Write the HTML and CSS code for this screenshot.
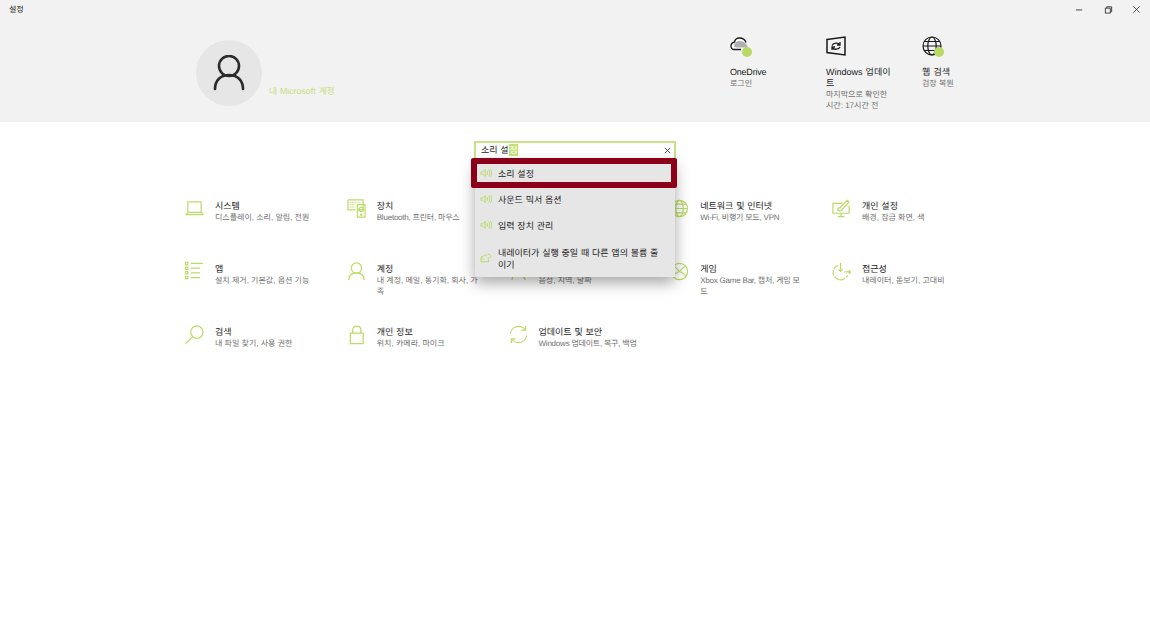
FILE: index.html
```html
<!DOCTYPE html>
<html lang="ko">
<head>
<meta charset="utf-8">
<title>설정</title>
<link rel="stylesheet" href="styles.css">
</head>
<body>
<div class="app">
  <header class="top">
    <div class="titlebar">
      <span class="apptitle">설정</span>
      <div class="winbtns">
        <svg class="winbtn" viewBox="0 0 10 10"><path d="M1 5.500h7" stroke="#333" fill="none"/></svg>
        <svg class="winbtn" viewBox="0 0 10 10"><path d="M1.500 3.500h5.500v5.500h-5.500zM3 3.500v-1.500h5.500v5.500h-1.500" stroke="#333" fill="none"/></svg>
        <svg class="winbtn" viewBox="0 0 10 10"><path d="M1.500 1.500l7 7M8.500 1.500l-7 7" stroke="#333" fill="none" stroke-width=".9"/></svg>
      </div>
    </div>
    <div class="hero">
      <div class="account">
        <div class="avatar">
          <svg width="32" height="36" viewBox="0 0 32 36"><circle cx="16" cy="11" r="10" fill="none" stroke="#2b2b2b" stroke-width="2.600"/><path d="M2 34c0-8 5-14 14-14s14 6 14 14" fill="none" stroke="#2b2b2b" stroke-width="2.600" stroke-linecap="round"/></svg>
        </div>
        <span class="acctlink">내 Microsoft 계정</span>
      </div>
      <div class="quick">
        <div class="qitem">
          <div class="qicon">
            <svg width="22" height="22" viewBox="0 0 22 22"><path d="M16 6.500C15 3.500 12.500 2 9.500 2 7 2 5 3.500 4.500 6 2.500 6.500 1 8 1 10c0 2 1.500 3.500 3.500 3.500H11" fill="#fff" stroke="#1a1a1a" stroke-width="1.300"/><path d="M4.500 7.500C6 5.500 8 5 10 5c3 0 5 1.500 6.500 3.500l1.500 3H6l-2-1z" fill="#b0b0b0"/></svg>
            <i class="dot"></i>
          </div>
          <div class="qname tight">OneDrive</div>
          <div class="qsub">로그인</div>
        </div>
        <div class="qitem">
          <div class="qicon">
            <svg width="20" height="20" viewBox="0 0 20 20"><path d="M1 3.500l18-2.500v18l-18-2.500z" fill="none" stroke="#1a1a1a" stroke-width="1.500"/><path d="M6 9.500c1-2.500 6-3.500 7.500-1M14 11c-1 2.500-6 3-7.500 1M14 6v3h-3M6 14v-3h3" fill="none" stroke="#1a1a1a" stroke-width="1.300"/></svg>
          </div>
          <div class="qname">Windows 업데이트</div>
          <div class="qsub">마지막으로 확인한 시간: 17시간 전</div>
        </div>
        <div class="qitem">
          <div class="qicon">
            <svg width="20" height="20" viewBox="0 0 20 20"><g fill="none" stroke="#1a1a1a" stroke-width="1.200"><circle cx="10" cy="10" r="9"/><ellipse cx="10" cy="10" rx="4.200" ry="9"/><path d="M1 10h18M2.500 5.500h15M2.500 14.500h15"/></g></svg>
            <i class="dot"></i>
          </div>
          <div class="qname">웹 검색</div>
          <div class="qsub">검장 복원</div>
        </div>
      </div>
    </div>
  </header>

  <main class="grid">
    <div class="tile">
      <svg class="ticon" viewBox="0 0 20 20"><path d="M3 3h14v11h-14zM.8 16.500h18.400M.8 16.500l2.200-2.500M19.200 16.500l-2.200-2.500" /></svg>
      <div class="ttext"><div class="tname">시스템</div><div class="tsub">디스플레이, 소리, 알림, 전원</div></div>
    </div>
    <div class="tile">
      <svg class="ticon" viewBox="0 0 20 20"><path d="M1 1h16v10.500h-6M1 1v10.500h8M11 6h8v13h-8z"/><circle cx="15" cy="11" r="2.200"/><circle cx="15" cy="16.500" r=".7"/><path d="M3 3.500h12M3 6h6M3 8.500h5" stroke-dasharray="1 1"/></svg>
      <div class="ttext"><div class="tname">장치</div><div class="tsub tight">Bluetooth, 프린터, 마우스</div></div>
    </div>
    <div class="tile">
      <svg class="ticon" viewBox="0 0 20 20"><rect x="5" y="1" width="10" height="18" rx="1"/></svg>
      <div class="ttext"><div class="tname">전화</div><div class="tsub">Android, iPhone 연결</div></div>
    </div>
    <div class="tile">
      <svg class="ticon" viewBox="0 0 20 20"><circle cx="10" cy="10" r="8.500"/><ellipse cx="10" cy="10" rx="4" ry="8.500"/><path d="M1.500 10h17M3 5.500h14M3 14.500h14"/></svg>
      <div class="ttext"><div class="tname">네트워크 및 인터넷</div><div class="tsub tight">Wi-Fi, 비행기 모드, VPN</div></div>
    </div>
    <div class="tile">
      <svg class="ticon" viewBox="0 0 20 20"><path d="M11 4.500h-10v10.500h17v-8M6 18.500h7M9.500 15v3.500M6 12c0-2 1-3 2.500-3L16 1.500l2 2-7.500 7.500c0 1.500-2.500 1.500-4.500 1z"/></svg>
      <div class="ttext"><div class="tname">개인 설정</div><div class="tsub">배경, 잠금 화면, 색</div></div>
    </div>
    <div class="tile">
      <svg class="ticon" viewBox="0 0 20 20"><path d="M6 1.500h13M6 6.500h10M6 11.500h10M6 16.500h10"/><path d="M.5.500h2.500v2.500h-2.500zM.5 5.300h2.500v2.500h-2.500zM.5 10h2.500v2.500h-2.500zM.5 15h2.500v2.500h-2.500z"/></svg>
      <div class="ttext"><div class="tname">앱</div><div class="tsub">설치 제거, 기본값, 옵션 기능</div></div>
    </div>
    <div class="tile">
      <svg class="ticon" viewBox="0 0 20 20"><circle cx="10" cy="6.500" r="5.500"/><path d="M2 19c0-5 3.500-7.500 8-7.500s8 2.500 8 7.500"/></svg>
      <div class="ttext"><div class="tname">계정</div><div class="tsub">내 계정, 메일, 동기화, 회사, 가족</div></div>
    </div>
    <div class="tile">
      <svg class="ticon" viewBox="0 0 20 20"><path d="M3 19c0-4 3-6 5-6M17 19c0-2-1-3-2-4"/></svg>
      <div class="ttext"><div class="tname">시간 및 언어</div><div class="tsub">음성, 지역, 날짜</div></div>
    </div>
    <div class="tile">
      <svg class="ticon" viewBox="0 0 20 20"><circle cx="10" cy="10" r="8.500"/><path d="M3.500 4.500c3 1 5 3.500 6.500 5.500 1.500-2 3.500-4.500 6.500-5.500M3 16c1-3 4-5 7-6 3 1 6 3 7 6"/></svg>
      <div class="ttext"><div class="tname">게임</div><div class="tsub tight">Xbox Game Bar, 캡처, 게임 모드</div></div>
    </div>
    <div class="tile">
      <svg class="ticon" viewBox="0 0 20 20"><path d="M6 3.500a8 8 0 1 0 10.500 10.500M7 18.500h1" stroke-dasharray="5.500 1.500"/><path d="M9 1v9M6.800 7.800l2.200 2.200 2.200-2.200M13 10.500h6.500M17.500 8.500l2 2-2 2"/></svg>
      <div class="ttext"><div class="tname">접근성</div><div class="tsub">내레이터, 돋보기, 고대비</div></div>
    </div>
    <div class="tile">
      <svg class="ticon" viewBox="0 0 20 20"><circle cx="12.500" cy="7.500" r="6.500"/><path d="M8 12.500l-7.500 7"/></svg>
      <div class="ttext"><div class="tname">검색</div><div class="tsub">내 파일 찾기, 사용 권한</div></div>
    </div>
    <div class="tile">
      <svg class="ticon" viewBox="0 0 20 20"><path d="M3.500 8.500h13.500v11h-13.500zM6 8.500v-3.500c0-5 8.500-5 8.500 0v3.500"/></svg>
      <div class="ttext"><div class="tname">개인 정보</div><div class="tsub">위치, 카메라, 마이크</div></div>
    </div>
    <div class="tile">
      <svg class="ticon" viewBox="0 0 20 20"><path d="M1.500 9c.5-4.500 4-7.500 8.500-7.500 3 0 5.500 1.500 7 3.500M18.500 11c-.5 4.500-4 7.500-8.500 7.500-3 0-5.500-1.500-7-3.500M17.500 1v4.500h-4.500M2.500 19v-4.500h4.500"/></svg>
      <div class="ttext"><div class="tname">업데이트 및 보안</div><div class="tsub tight">Windows 업데이트, 복구, 백업</div></div>
    </div>
  </main>

  <div class="search">
    <div class="searchbox">
      <span class="query">소리 설<mark class="sel">정</mark></span>
      <svg class="clear" viewBox="0 0 8 8"><path d="M1 1l6 6M7 1l-6 6" stroke="#333" fill="none"/></svg>
    </div>
    <ul class="results">
      <li class="result current">
        <svg class="ricon" viewBox="0 0 14 12"><path d="M1 4.500h2l3-2.500v8l-3-2.500h-2zM8 3.500c1 1.500 1 3.500 0 5M10 2c2 2 2 6 0 8M12 1c2.500 2.500 2.500 7.500 0 10"/></svg>
        <span class="rlabel">소리 설정</span>
      </li>
      <li class="result">
        <svg class="ricon" viewBox="0 0 14 12"><path d="M1 4.500h2l3-2.500v8l-3-2.500h-2zM8 3.500c1 1.500 1 3.500 0 5M10 2c2 2 2 6 0 8M12 1c2.500 2.500 2.500 7.500 0 10"/></svg>
        <span class="rlabel">사운드 믹서 옵션</span>
      </li>
      <li class="result">
        <svg class="ricon" viewBox="0 0 14 12"><path d="M1 4.500h2l3-2.500v8l-3-2.500h-2zM8 3.500c1 1.500 1 3.500 0 5M10 2c2 2 2 6 0 8M12 1c2.500 2.500 2.500 7.500 0 10"/></svg>
        <span class="rlabel">입력 장치 관리</span>
      </li>
      <li class="result tall">
        <svg class="ricon" viewBox="0 0 14 12"><path d="M1 5l6-3 1.500 1M1 5v5.500h9v-3M1 5l4 3M9 1.500c2 0 3.500 1 4 2.500M9 6c2 0 3.500-.5 4-2"/></svg>
        <span class="rlabel">내레이터가 실행 중일 때 다른 앱의 볼륨 줄이기</span>
      </li>
    </ul>
  </div>
</div>
</body>
</html>
```
FILE: styles.css
```css
* { box-sizing: border-box; }
html, body { margin: 0; height: 100%; background: #fff; }
body { font-family: "Liberation Sans", "Noto Sans CJK KR", sans-serif; color: #1a1a1a; overflow: hidden; text-rendering: geometricPrecision; }
.app { position: relative; width: 1150px; height: 623px; }

.top { height: 122px; background: #f2f2f2; }
.titlebar { height: 18px; display: flex; justify-content: space-between; align-items: center; }
.apptitle { font-size: 8px; margin: 2px 0 0 9px; line-height: 16px; }
.winbtns { display: flex; gap: 19.500px; margin-right: 9px; }
.winbtn { width: 9px; height: 9px; display: block; }

.hero { position: relative; height: 104px; display: flex; padding-left: 196px; }
.account { display: flex; align-items: flex-end; height: 66px; margin-top: 22px; }
.avatar { width: 66px; height: 66px; border-radius: 50%; background: #e6e6e6; display: flex; align-items: center; justify-content: center; }
.acctlink { font-size: 8.800px; color: #c6e07e; margin-left: 7px; margin-bottom: 9px; line-height: 12px; word-spacing: .4px; }

.quick { display: flex; margin-left: auto; margin-right: 132px; padding-top: 18px; }
.qitem { width: 96px; padding-right: 29px; }
.qicon { position: relative; width: 24px; height: 24px; margin-bottom: 7px; }
.qicon svg { display: block; }
.dot { position: absolute; left: 12px; top: 11px; width: 10px; height: 10px; border-radius: 50%; background: #b9d966; }
.qname { font-size: 9px; line-height: 11px; color: #222; word-break: break-all; word-spacing: .6px; }
.qsub { font-size: 8px; line-height: 10.500px; color: #707070; margin-top: 1px; word-break: break-all; }

.grid { display: grid; grid-template-columns: repeat(5, 161.750px); grid-auto-rows: 63px; margin: 76px 0 0 185px; }
.tile { display: flex; gap: 11px; align-items: flex-start; }
.ticon { width: 19px; height: 19px; flex: none; fill: none; stroke: #bcdc68; stroke-width: 1.300; margin-top: 1px; overflow: visible; }
.ttext { width: 103px; padding-top: 2px; }
.tname { font-size: 9px; line-height: 13px; color: #222; word-spacing: .3px; }
.tsub { font-size: 8px; line-height: 10.500px; color: #707070; word-break: break-all; }
.tight { letter-spacing: -.22px; }

.search { position: absolute; left: 474px; top: 141px; width: 202px; }
.searchbox { height: 19px; border: 2px solid #c9e285; background: #fff; display: flex; align-items: center; justify-content: space-between; padding: 0 3px 0 5px; }
.query { font-size: 9px; color: #222; line-height: 13px; word-spacing: .3px; }
.sel { display: inline-block; height: 12px; line-height: 12px; background: #c4df76; color: #fff; padding: 0 .5px; }
.clear { width: 7px; height: 7px; }
.results { list-style: none; margin: 0 1px; padding: 0; background: #e6e6e6; box-shadow: 0 6px 14px rgba(0,0,0,.35); }
.result { display: flex; align-items: center; height: 26px; padding: 0 14px 0 5px; gap: 6px; font-size: 9px; line-height: 12px; color: #222; word-break: break-all; word-spacing: .3px; }
.result.tall { height: 39px; }
.rlabel { padding-top: 2px; }
.ricon { width: 12px; height: 10px; flex: none; fill: none; stroke: #b9d966; stroke-width: 1.100; }
.result.current { position: relative; }
.result.current::after { content: ""; position: absolute; left: -4px; right: -2px; top: -2px; bottom: -2px; border: 6px solid #8b0018; border-radius: 2px; }
```
